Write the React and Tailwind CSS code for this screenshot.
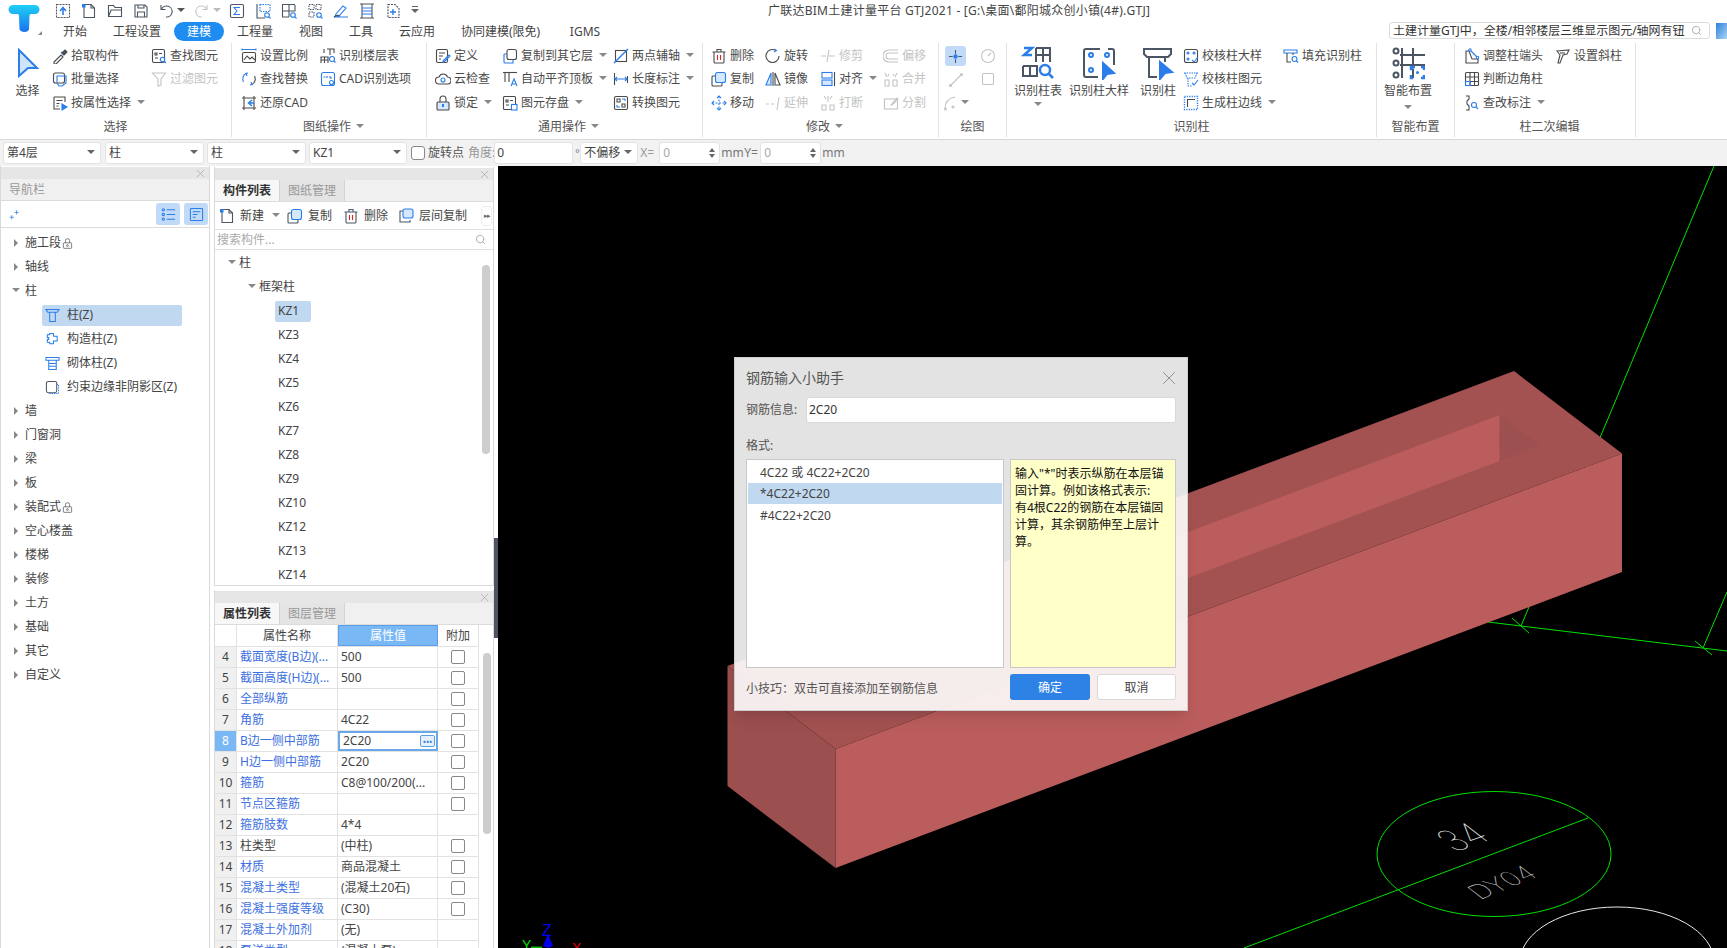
import React from "react";
import { X, Search } from "lucide-react";

const BLUE = "#2b7de9";

function Ic({ children, s = 16, c = "" }) {
  return (
    <svg width={s} height={s} viewBox="0 0 16 16" fill="none" stroke="currentColor" strokeWidth="1.1" className={`shrink-0 ${c}`}>
      {children}
    </svg>
  );
}

function Caret({ dir = "down", c = "text-[#888]" }) {
  const pts = dir === "down" ? "0,1 8,1 4,5" : "2,0 6,4 2,8";
  return (
    <svg width="8" height="8" viewBox="0 0 8 8" className={`shrink-0 ${c}`}>
      <polygon points={pts} fill="currentColor" />
    </svg>
  );
}

const icons = {
  pick: <><path d="M2 14l7-7 2 2-7 7H2z" /><path d="M9 4l3 3" stroke={BLUE} /><path d="M10 5l3-3 2 2-3 3z" fill="#4b5563" /></>,
  batch: <><rect x="1.5" y="2" width="11" height="10" rx="2" /><path d="M5 5h9v7l-4 3H7l-2-3z" stroke={BLUE} /></>,
  attr: <><path d="M2 2h11v5M2 2v12h6" /><path d="M4.5 5.5h6M4.5 8.5h3M4.5 11h2" /><path d="M10 9l5 3-5 3z" fill={BLUE} stroke={BLUE} /></>,
  find: <><rect x="1.5" y="1.5" width="12" height="13" rx="1.5" /><path d="M4 5h2v2H4zM8 5.5h3M4 10h3" /><circle cx="11.5" cy="11.5" r="2.2" stroke={BLUE} fill="#fff" /><path d="M13 13l2 2" stroke={BLUE} /></>,
  filter: <><path d="M1.5 2h13L10 8v6l-3 1V8z" /></>,
  scale: <><path d="M1 1.5h14M1 .5v2M15 .5v2" stroke={BLUE} /><rect x="1.5" y="4.5" width="13" height="10" rx="1.5" /><path d="M3 12l3-4 3 3 2-2 3 3" /></>,
  replace: <><path d="M5 2.5C2 4 1 8 2.5 11" stroke={BLUE} /><path d="M11 13.5c3-1.5 4-5.5 2.5-8.5" /><path d="M7 2l-2 .5L6 5M9 14l2-.5L10 11" stroke={BLUE} /></>,
  restore: <><path d="M3 1v14M13 1v14M1 3h14M1 13h14" /><path d="M11 5L7.5 8l3.5 3M7.5 8H13" stroke={BLUE} strokeWidth="1.5" /></>,
  floor: <><path d="M1 15V9h7v6M1 12h7M4.5 9v6M4 5V1M7 1h7v4M10 1v6" /><circle cx="12" cy="11" r="2.5" stroke={BLUE} fill="#fff" /><path d="M14 13l1.5 1.5" stroke={BLUE} /></>,
  cad: <><rect x="1.5" y="1.5" width="13" height="13" rx="2" stroke={BLUE} /><path d="M3.5 6h2M7 5v2M10 5v2h2" stroke={BLUE} /><circle cx="11.5" cy="11.5" r="2" stroke={BLUE} /></>,
  def: <><rect x="1.5" y="1.5" width="11" height="13" rx="1.5" /><path d="M4 5h6M4 8h4M4 11h2" /><path d="M8 13l6-6 1 1-6 6H8z" stroke={BLUE} /></>,
  cloud: <><path d="M4 13a3.5 3.5 0 010-7 4.5 4.5 0 018.5 0 3.5 3.5 0 010 7z" /><circle cx="8" cy="9" r="2" stroke={BLUE} /></>,
  lock: <><path d="M5 7V4a3 3 0 016 0v3" /><rect x="2" y="7" width="12" height="8" rx="1" fill="#d6e8fb" /><path d="M8 9v3" stroke={BLUE} strokeWidth="2" /></>,
  copyTo: <><path d="M2 6h3M2 6v8a1 1 0 001 1h8v-3" stroke={BLUE} /><rect x="5" y="1.5" width="9.5" height="10" rx="2" /></>,
  align: <><path d="M1 1.5h14" /><path d="M3 2v9M7 2v9" /><path d="M9 15l3-7 3 7M10 13h4" stroke={BLUE} /></>,
  save: <><rect x="1.5" y="1.5" width="12" height="13" rx="1" /><path d="M4 5h2v2H4zM8 5.5h3M4 10h3" /><rect x="9.5" y="9.5" width="5.5" height="5.5" stroke={BLUE} fill="#fff" /></>,
  axis: <><rect x="2.5" y="2.5" width="11" height="11" /><path d="M1 15L15 1M1 15" stroke={BLUE} strokeWidth="1.4" /></>,
  dim: <><path d="M1.5 2v12M14.5 5v7" /><path d="M2 8h12M4 6L2 8l2 2M12 6l2 2-2 2" stroke={BLUE} /></>,
  convert: <><rect x="1.5" y="1.5" width="13" height="13" rx="1.5" /><path d="M4 4h3v3H4z" /><path d="M9 9h3v3H9z" /><path d="M9 4h3v2M7 12H4v-2" stroke={BLUE} /></>,
  del: <><path d="M1.5 4h13M6 4V1.5h4V4" /><path d="M3 4v10a1 1 0 001 1h8a1 1 0 001-1V4" /><path d="M6.5 7v5M9.5 7v5" stroke="#e02020" /></>,
  copy: <><path d="M5 5H2a1 1 0 00-1 1v8a1 1 0 001 1h8a1 1 0 001-1v-3" /><rect x="4.5" y="1.5" width="10" height="10" rx="2" fill="#d6e8fb" stroke={BLUE} /></>,
  move: <><path d="M8 1v14M1 8h14" stroke={BLUE} strokeDasharray="2 1.5" /><path d="M6 3l2-2 2 2M6 13l2 2 2-2M3 6L1 8l2 2M13 6l2 2-2 2" stroke={BLUE} /></>,
  rotate: <><path d="M11 2.5A6.500 6.500 0 1014 8" /><path d="M9 1l2.500 1.500L9 4" stroke={BLUE} /></>,
  mirror: <><path d="M6 2L1 14h5z" fill="#d6e8fb" stroke={BLUE} /><path d="M10 2l5 12h-5zM8 1v14" /></>,
  extend: <><path d="M1 9h3M6 9h3M14 2l-2 13" /></>,
  trim: <><path d="M1 8h5M9 8h6M9 2L7 14" /></>,
  alignObj: <><rect x="2" y="1.5" width="10" height="5.5" stroke={BLUE} /><rect x="2" y="9" width="10" height="5.5" fill="#d6e8fb" stroke={BLUE} /><path d="M14.5 1v14" /></>,
  brk: <><path d="M2 10h4v5H2zM10 10h4v5h-4zM4 1l2 3M12 1l-2 3M8 1v6" /></>,
  offset: <><path d="M15 2H6a6 6 0 000 12h9M15 5H6a3 3 0 000 6h9" /></>,
  merge: <><path d="M2 9h4v6H2zM10 9h4v6h-4zM2 2l2 4M14 2l-2 4M6 3l-1 2M10 3l1 2" /></>,
  split: <><rect x="1.5" y="4" width="13" height="10" /><path d="M8 10l6-7 1 1-6 6z" /></>,
  snap: <><path d="M1 8h4M11 8h4M8 1v4M8 11v4" /><circle cx="8" cy="8" r="1.8" fill={BLUE} stroke={BLUE} /></>,
  dial: <><circle cx="8" cy="8" r="6.5" /><path d="M8 8l3-3" /></>,
  line: <><path d="M2 14L14 2" /><circle cx="2.5" cy="13.5" r="1" /><circle cx="13.5" cy="2.5" r="1" /></>,
  rect: <><rect x="2.5" y="2.5" width="11" height="11" rx="1" /></>,
  arc: <><path d="M2 14C2 7 6 3 12 2" /><circle cx="2.5" cy="14" r="1" /><circle cx="10" cy="12" r="1" /></>,
  checkBig: <><rect x="1.5" y="1.5" width="13" height="13" rx="2" /><circle cx="5" cy="5" r="1" stroke={BLUE} /><circle cx="11" cy="5" r="1" stroke={BLUE} /><circle cx="5" cy="11" r="1" stroke={BLUE} /><path d="M9 12l2 2 4-5" stroke={BLUE} /></>,
  checkCol: <><path d="M1 2h14M2 2l2 5h8l2-5" stroke={BLUE} strokeDasharray="1.5 1" /><path d="M5 7v8h4" stroke={BLUE} strokeDasharray="1.5 1" /><path d="M9 12l2 2 4-5" stroke={BLUE} /></>,
  edge: <><rect x="1.5" y="1.5" width="13" height="13" stroke={BLUE} strokeDasharray="1.2 1.2" strokeWidth="1.4" /><path d="M4.5 12V4.5H12" /></>,
  fill: <><path d="M1 2h13v3H1z" stroke={BLUE} /><path d="M4 5v9h4M10 5v2" /><circle cx="11.5" cy="11" r="2.5" stroke={BLUE} /><path d="M13.5 13l1.5 1.5" stroke={BLUE} /></>,
  head: <><path d="M2 3v12h12v-4H8L5 3z" /><circle cx="6" cy="2" r="1.2" stroke={BLUE} /><path d="M7 3l6 6" stroke={BLUE} /><circle cx="13.5" cy="9.5" r="1.2" stroke={BLUE} /></>,
  slant: <><path d="M2 3l12-1-2 4-4 1-3 8H3l2-8z" /><path d="M5 5h5" /></>,
  corner: <><rect x="1.5" y="1.5" width="13" height="13" rx="1" /><path d="M1.5 6h13M1.5 10.5h13M6 1.5v13M10.5 1.5v13" /><rect x="1.5" y="10.5" width="4.5" height="4" stroke={BLUE} /></>,
  note: <><path d="M2 1h3v3L3 6v3l2 2v4H2" /><circle cx="10" cy="10" r="2.5" stroke={BLUE} /><path d="M12 12l2 2" stroke={BLUE} /></>,
  newFile: <><path d="M3 1.5h7l3.5 3.5v9.5H3z" /><path d="M10 1.5V5h3.5" /><rect x="1" y="1" width="3.5" height="3.5" fill={BLUE} stroke="none" /></>,
  layerCopy: <><path d="M5 3H2v11h10v-2" /><path d="M3.5 1.5" /><rect x="5" y="1" width="10" height="9" rx="2" fill="#d6e8fb" stroke={BLUE} /></>,
  upload: <><rect x="1.5" y="1.5" width="13" height="13" strokeDasharray="2 1" /><path d="M8 12V6M5 8l3-3.5L11 8" stroke={BLUE} strokeWidth="1.6" /></>,
  folder: <><path d="M1.5 13.5v-11h5l1.5 2h6.500v9zM1.500 13.500L4 7h11" /></>,
  disk: <><path d="M2 2h10l2 2v10H2z" /><path d="M5 2v3h6V2M4.5 14V9h7v5" /></>,
  undo: <><path d="M3 2v4.5h4.5" /><path d="M3.5 6.5A5.500 5.500 0 118 14" /></>,
  sigma: <><rect x="1.5" y="1.5" width="13" height="13" rx="1.5" /><path d="M11 4.5H5l3 3.500-3 3.500h6" stroke={BLUE} /></>,
  tableA: <><path d="M2 1v14h8" /><rect x="5" y="1.5" width="10" height="7" stroke={BLUE} strokeDasharray="1.5 1" /><circle cx="12" cy="12" r="2.3" stroke={BLUE} /><path d="M14 14l1.500 1.500" stroke={BLUE} /></>,
  tableB: <><path d="M10 1.500H1.500V14H8M1.500 8H14V2M8 1.500V14M14 1.500h-4" /><circle cx="12" cy="12" r="2.3" stroke={BLUE} /><path d="M14 14l1.500 1.500" stroke={BLUE} /></>,
  tableC: <><path d="M2 1.500h5v5H2zM2 9h5v5H2zM9 1.500h5v5H9z" strokeDasharray="1.5 1" /><circle cx="12" cy="12" r="2.3" stroke={BLUE} /><path d="M14 14l1.500 1.500" stroke={BLUE} /></>,
  pen: <><path d="M1 14h14M3 11l7-8 3 2-7 8-4 1z" stroke={BLUE} /><path d="M1 14c2-2 4-2 6-1" /></>,
  ladder: <><path d="M3 1v14M13 1v14M1 1h14M1 15h14" /><path d="M3 5h10M3 8h10M3 11h10" stroke={BLUE} /></>,
  addBox: <><path d="M3 1.500h7l4 4v9H3z" strokeDasharray="2 1" /><path d="M5 9h6M8 6v6" stroke={BLUE} strokeWidth="1.4" /></>,
  spark: <><path d="M11 2v6M8 5h6M4 9v6M1 12h6" stroke={BLUE} /></>,
  list: <><circle cx="2.5" cy="3" r="1.2" stroke={BLUE} /><circle cx="2.5" cy="8" r="1.2" stroke={BLUE} /><circle cx="2.5" cy="13" r="1.2" stroke={BLUE} /><path d="M6 3h9M6 8h9M6 13h9" stroke={BLUE} /></>,
  form: <><rect x="1.5" y="1.5" width="13" height="13" rx="1" stroke={BLUE} /><path d="M4 5h8M4 8h5M4 11h3" stroke={BLUE} /></>,
  column: <><path d="M1 1.500h14l-2 3H3zM5 4.500v10h6v-10" stroke={BLUE} /></>,
  gz: <><path d="M5 1.500h4v3h4v5h-4v3H5V11H2.500V8H4V6H2.500V3H5z" stroke={BLUE} /></>,
  brick: <><path d="M1 1.500h14v3H1zM4 4.500v10h8v-10M4 8h8M4 11h8" stroke={BLUE} /></>,
  shade: <><rect x="1.5" y="1.5" width="11" height="12" rx="2" /><path d="M12.500 4.500l2 .5v9.500H4" stroke={BLUE} strokeDasharray="1.5 1" /></>,
  lockSm: <><path d="M5 7V4a3 3 0 016 0v3" /><rect x="2" y="7" width="12" height="8" rx="1" /><circle cx="8" cy="11" r="1.3" /></>,
};

function Item({ icon, label, caret, off }) {
  return (
    <div className={`h-[23.5px] flex items-center gap-[3px] whitespace-nowrap ${off ? "text-[#c4c4c4]" : "text-[#4a4a4a]"}`}>
      <Ic>{icons[icon]}</Ic>
      <span>{label}</span>
      {caret && <span className="ml-[3px]"><Caret /></span>}
    </div>
  );
}

function Group({ label, caret, className, children }) {
  return (
    <div className={`h-full flex flex-col border-r border-[#e2e2e2] ${className}`}>
      <div className="h-[74px] pt-px flex">{children}</div>
      <div className="h-[20px] flex items-center justify-center gap-[5px] text-[#555]">
        <span>{label}</span>
        {caret && <Caret />}
      </div>
    </div>
  );
}

function BigBtn({ label, caret, className, children }) {
  return (
    <div className={`flex flex-col items-center text-[#4a4a4a] ${className}`}>
      <div className="h-[34px] mt-[2px] flex items-center">{children}</div>
      <div className="h-[21px] flex items-center whitespace-nowrap">{label}</div>
      {caret && <Caret />}
    </div>
  );
}

function BigIcon({ children }) {
  return (
    <svg width="34" height="34" viewBox="0 0 34 34" fill="none" stroke="#4b5563" strokeWidth="2">
      {children}
    </svg>
  );
}

function Ribbon() {
  return (
    <div className="h-[99px] bg-white border-b border-[#d8d8d8] py-[2px] flex text-[12px] leading-none">
      <Group label="选择" className="w-[232px]">
        <BigBtn label="选择" className="w-[52px] pl-[3px]">
          <svg width="24" height="30" viewBox="0 0 24 30" fill="#cfe3fa" stroke={BLUE} strokeWidth="2"><path d="M3 2l18 18h-9L3 28z" /></svg>
        </BigBtn>
        <div className="w-[99px]">
          <Item icon="pick" label="拾取构件" />
          <Item icon="batch" label="批量选择" />
          <Item icon="attr" label="按属性选择" caret />
        </div>
        <div>
          <Item icon="find" label="查找图元" />
          <Item icon="filter" label="过滤图元" off />
        </div>
      </Group>
      <Group label="图纸操作" caret className="w-[195px] pl-[9px]">
        <div className="w-[79px]">
          <Item icon="scale" label="设置比例" />
          <Item icon="replace" label="查找替换" />
          <Item icon="restore" label="还原CAD" />
        </div>
        <div>
          <Item icon="floor" label="识别楼层表" />
          <Item icon="cad" label="CAD识别选项" />
        </div>
      </Group>
      <Group label="通用操作" caret className="w-[276px] pl-[8px]">
        <div className="w-[67px]">
          <Item icon="def" label="定义" />
          <Item icon="cloud" label="云检查" />
          <Item icon="lock" label="锁定" caret />
        </div>
        <div className="w-[111px]">
          <Item icon="copyTo" label="复制到其它层" caret />
          <Item icon="align" label="自动平齐顶板" caret />
          <Item icon="save" label="图元存盘" caret />
        </div>
        <div>
          <Item icon="axis" label="两点辅轴" caret />
          <Item icon="dim" label="长度标注" caret />
          <Item icon="convert" label="转换图元" />
        </div>
      </Group>
      <Group label="修改" caret className="w-[236px] pl-[8px]">
        <div className="w-[54px]">
          <Item icon="del" label="删除" />
          <Item icon="copy" label="复制" />
          <Item icon="move" label="移动" />
        </div>
        <div className="w-[55px]">
          <Item icon="rotate" label="旋转" />
          <Item icon="mirror" label="镜像" />
          <Item icon="extend" label="延伸" off />
        </div>
        <div className="w-[63px]">
          <Item icon="trim" label="修剪" off />
          <Item icon="alignObj" label="对齐" caret />
          <Item icon="brk" label="打断" off />
        </div>
        <div>
          <Item icon="offset" label="偏移" off />
          <Item icon="merge" label="合并" off />
          <Item icon="split" label="分割" off />
        </div>
      </Group>
      <Group label="绘图" className="w-[68px]">
        <div className="w-[33px] flex flex-col items-center">
          <div className="w-[21px] h-[20px] mt-[2px] mb-[2px] bg-[#c0daf7] rounded-[3px] flex items-center justify-center text-[#4b5563]"><Ic s={15}>{icons.snap}</Ic></div>
          <div className="h-[23.5px] flex items-center text-[#c4c4c4]"><Ic>{icons.line}</Ic></div>
          <div className="h-[23.5px] flex items-center gap-[2px] text-[#c4c4c4]"><Ic>{icons.arc}</Ic><Caret /></div>
        </div>
        <div className="w-[32px] flex flex-col items-center text-[#c4c4c4]">
          <div className="h-[23.5px] flex items-center"><Ic>{icons.dial}</Ic></div>
          <div className="h-[23.5px] flex items-center"><Ic>{icons.rect}</Ic></div>
        </div>
      </Group>
      <Group label="识别柱" className="w-[370px]">
        <BigBtn label="识别柱表" caret className="w-[62px]">
          <BigIcon>
            <path d="M3 2h8l-8 7h8" stroke={BLUE} strokeWidth="2.5" />
            <path d="M15 2h14v14M15 2v14M22 2v14M15 9h14M2 20v10h14V20H2M9 20v10" />
            <circle cx="24" cy="24" r="5" stroke={BLUE} strokeWidth="2.5" /><path d="M28 28l4 4" stroke={BLUE} strokeWidth="2.5" />
          </BigIcon>
        </BigBtn>
        <BigBtn label="识别柱大样" className="w-[60px]">
          <BigIcon>
            <path d="M18 3H4a2 2 0 00-2 2v24a2 2 0 002 2h12M26 3h4a2 2 0 012 2v14" />
            <circle cx="9" cy="9" r="2" stroke={BLUE} strokeWidth="2" /><circle cx="25" cy="9" r="2" stroke={BLUE} strokeWidth="2" /><circle cx="9" cy="24" r="2" stroke={BLUE} strokeWidth="2" />
            <path d="M21 17l11 10-7 1-4 5z" fill={BLUE} stroke={BLUE} />
          </BigIcon>
        </BigBtn>
        <BigBtn label="识别柱" className="w-[54px] pl-[4px]">
          <BigIcon>
            <path d="M3 3h27v5l-3 3H6L3 8zM8 11v20h8M24 11v5" />
            <path d="M19 16l12 10-7 1-5 6z" fill={BLUE} stroke={BLUE} />
          </BigIcon>
        </BigBtn>
        <div className="w-[100px]">
          <Item icon="checkBig" label="校核柱大样" />
          <Item icon="checkCol" label="校核柱图元" />
          <Item icon="edge" label="生成柱边线" caret />
        </div>
        <div>
          <Item icon="fill" label="填充识别柱" />
        </div>
      </Group>
      <Group label="智能布置" className="w-[78px]">
        <BigBtn label="智能布置" className="w-[62px]">
          <BigIcon>
            <path d="M11 2v30M22 2v30M9 9h25M9 19h25" />
            <circle cx="5" cy="5" r="2.5" /><circle cx="5" cy="17" r="2.5" /><circle cx="5" cy="29" r="2.5" />
            <path d="M22 23h-2v-2h4M30 21h3v3M33 29v3h-3M22 32h-2v-3" stroke={BLUE} strokeWidth="2.5" fill="#fff" />
            <circle cx="26.5" cy="26.5" r="1.5" fill={BLUE} stroke="none" />
          </BigIcon>
        </BigBtn>
        <span className="-ml-[35px] mt-[60px] h-[8px]"><Caret /></span>
      </Group>
      <Group label="柱二次编辑" className="w-[181px] pl-[9px]">
        <div className="w-[91px]">
          <Item icon="head" label="调整柱端头" />
          <Item icon="corner" label="判断边角柱" />
          <Item icon="note" label="查改标注" caret />
        </div>
        <div>
          <Item icon="slant" label="设置斜柱" />
        </div>
      </Group>
    </div>
  );
}

function TitleRows() {
  const tabs = [
    ["开始", "w-[62px]"],
    ["工程设置", "w-[62px]"],
    ["建模", "w-[50px] ml-[6px] bg-[#1e8cf0] text-white rounded-full"],
    ["工程量", "w-[62px]"],
    ["视图", "w-[50px]"],
    ["工具", "w-[50px]"],
    ["云应用", "w-[62px]"],
    ["协同建模(限免)", "w-[105px]"],
    ["IGMS", "w-[64px]"],
  ];
  return (
    <div className="h-[41px] bg-white flex text-[12px] leading-none text-[#444]">
      <div className="w-[44px] relative">
        <svg width="32" height="30" viewBox="0 0 32 30" className="ml-[8px] mt-[3px]">
          <defs>
            <linearGradient id="tg" x1="0" y1="0" x2="0" y2="1">
              <stop offset="0" stopColor="#1fd0f5" />
              <stop offset="1" stopColor="#1a72ee" />
            </linearGradient>
          </defs>
          <path d="M5 2h22a4 4 0 010 9h-4c-1 0-1.500 1-1.500 2l-.5 13c0 4-9 4-9.500 0L11 13c0-1-.5-2-1.500-2H5a4.500 4.500 0 010-9z" fill="url(#tg)" />
        </svg>
        <span className="absolute left-[38px] top-[31px] w-0 h-0 border-l-[4px] border-l-transparent border-b-[4px] border-b-[#888]" />
      </div>
      <div className="flex-1 flex flex-col">
        <div className="h-[22px] flex items-center text-[#4b5563]">
          <div className="ml-[6px] w-[26px] flex justify-center"><Ic>{icons.upload}</Ic></div>
          <div className="w-[26px] flex justify-center"><Ic>{icons.newFile}</Ic></div>
          <div className="w-[26px] flex justify-center"><Ic>{icons.folder}</Ic></div>
          <div className="w-[26px] flex justify-center"><Ic>{icons.disk}</Ic></div>
          <div className="w-[40px] flex items-center pl-[4px] gap-[3px]"><Ic>{icons.undo}</Ic><Caret c="text-[#555]" /></div>
          <div className="w-[30px] flex items-center gap-[3px] text-[#c4c4c4]"><span className="-scale-x-100 flex"><Ic>{icons.undo}</Ic></span><Caret c="text-[#bbb]" /></div>
          <div className="w-[26px] flex justify-center"><Ic>{icons.sigma}</Ic></div>
          <div className="w-[26px] flex justify-center"><Ic>{icons.tableA}</Ic></div>
          <div className="w-[26px] flex justify-center"><Ic>{icons.tableB}</Ic></div>
          <div className="w-[26px] flex justify-center"><Ic>{icons.tableC}</Ic></div>
          <div className="w-[26px] flex justify-center"><Ic>{icons.pen}</Ic></div>
          <div className="w-[26px] flex justify-center"><Ic>{icons.ladder}</Ic></div>
          <div className="w-[26px] flex justify-center"><Ic>{icons.addBox}</Ic></div>
          <div className="w-[18px] flex flex-col items-center gap-[1px]"><span className="w-[6px] h-px bg-[#666]" /><Caret c="text-[#666]" /></div>
          <div className="ml-[344px] text-[12px] tracking-[0.25px] text-[#444] whitespace-pre">广联达BIM土建计量平台 GTJ2021 - [G:\桌面\鄱阳城众创小镇(4#).GTJ]</div>
        </div>
        <div className="h-[19px] flex items-stretch">
          {tabs.map(([t, c]) => (
            <div key={t} className={`flex items-center justify-center ${c}`}>{t}</div>
          ))}
          <div className="ml-auto flex items-center mb-[2px]">
            <div className="w-[321px] h-[17px] border border-[#dcdcdc] rounded-[3px] flex items-center pl-[3px] pr-[7px] overflow-hidden">
              <span className="w-[293px] overflow-hidden whitespace-nowrap text-[#333]">土建计量GTJ中，全楼/相邻楼层三维显示图元/轴网有钮</span>
              <Search size={11} className="ml-auto text-[#aaa]" />
            </div>
            <div className="ml-[6px] w-[11px] h-[16px] bg-gradient-to-br from-[#2a80d8] to-[#a8d4f4]" />
          </div>
        </div>
      </div>
    </div>
  );
}

function Combo({ label, className }) {
  return (
    <div className={`h-[22px] bg-white border border-[#e3e3e3] rounded-[3px] flex items-center justify-between pl-[3px] pr-[5px] text-[#444] ${className}`}>
      <span>{label}</span>
      <Caret c="text-[#666]" />
    </div>
  );
}

function Spin({ className }) {
  return (
    <div className={`h-[22px] bg-white border border-[#e3e3e3] rounded-[3px] flex items-center justify-between pl-[3px] pr-[4px] text-[#aaa] ${className}`}>
      <span>0</span>
      <div className="flex flex-col gap-[2px] text-[#666]">
        <span className="w-0 h-0 border-x-[3px] border-x-transparent border-b-[4px] border-b-current" />
        <span className="w-0 h-0 border-x-[3px] border-x-transparent border-t-[4px] border-t-current" />
      </div>
    </div>
  );
}

function Options() {
  return (
    <div className="h-[26px] bg-[#f2f2f2] flex items-center pl-[3px] text-[12px] leading-none text-[#777]">
      <Combo label="第4层" className="w-[98px]" />
      <Combo label="柱" className="w-[99px] ml-[4px]" />
      <Combo label="柱" className="w-[99px] ml-[3px]" />
      <Combo label="KZ1" className="w-[98px] ml-[3px]" />
      <span className="w-[14px] h-[14px] ml-[4px] bg-white border border-[#888] rounded-[3px]" />
      <span className="ml-[3px] text-[#555]">旋转点</span>
      <span className="ml-[4px] text-[#999]">角度:</span>
      <div className="-ml-[1px] w-[79px] h-[22px] bg-white border border-[#e3e3e3] rounded-[3px] flex items-center pl-[2px] text-[#444]">0</div>
      <span className="ml-[2px] w-[5px] text-[10px]">°</span>
      <Combo label="不偏移" className="w-[58px]" />
      <span className="ml-[2px] w-[19px] text-[#999]">X=</span>
      <Spin className="w-[61px]" />
      <span className="ml-[1px] w-[23px] text-[#777]">mm</span>
      <span className="w-[16px] text-[#777]">Y=</span>
      <Spin className="w-[61px]" />
      <span className="ml-[1px] text-[#777]">mm</span>
    </div>
  );
}

function PanelBar() {
  return (
    <div className="h-[12px] mt-px bg-[#e6e6e6] flex items-center justify-end pr-[2px] shrink-0">
      <X size={13} strokeWidth={1.4} className="text-[#aaa]" />
    </div>
  );
}

function NavRow({ label, open, locked }) {
  return (
    <div className="h-[24px] flex items-center text-[#444]">
      <span className="w-[24px] pl-[11px] flex">
        <Caret dir={open ? "down" : "right"} />
      </span>
      <span>{label}</span>
      {locked && <span className="ml-[1px] text-[#555]"><Ic s={11}>{icons.lockSm}</Ic></span>}
    </div>
  );
}

function NavSub({ icon, label, active }) {
  return (
    <div className="h-[24px] flex items-center">
      <div className={`ml-[41px] w-[140px] h-[21px] flex items-center gap-[7px] pl-[3px] rounded-[2px] text-[#444] whitespace-nowrap ${active ? "bg-[#c0d8f0]" : ""}`}>
        <span className="text-[#4b5563]"><Ic s={15}>{icons[icon]}</Ic></span>
        <span>{label}</span>
      </div>
    </div>
  );
}

function NavPanel() {
  return (
    <div className="w-[210px] shrink-0 h-full border-x border-[#d9d9d9] bg-white flex flex-col">
      <PanelBar />
      <div className="h-[22px] bg-[#f0f0f0] border-b border-[#dcdcdc] flex items-center pl-[8px] text-[#999]">导航栏</div>
      <div className="h-[27px] border-b border-[#dcdcdc] flex items-center pl-[8px] pr-[1px]">
        <Ic s={11}>{icons.spark}</Ic>
        <div className="ml-auto w-[24px] h-[22px] bg-[#c0daf7] rounded-[3px] flex items-center justify-center"><Ic s={15}>{icons.list}</Ic></div>
        <div className="ml-[4px] w-[24px] h-[22px] bg-[#c0daf7] rounded-[3px] flex items-center justify-center"><Ic s={15}>{icons.form}</Ic></div>
      </div>
      <div className="pt-[3px]">
        <NavRow label="施工段" locked />
        <NavRow label="轴线" />
        <NavRow label="柱" open />
        <NavSub icon="column" label="柱(Z)" active />
        <NavSub icon="gz" label="构造柱(Z)" />
        <NavSub icon="brick" label="砌体柱(Z)" />
        <NavSub icon="shade" label="约束边缘非阴影区(Z)" />
        {["墙", "门窗洞", "梁", "板"].map((t) => <NavRow key={t} label={t} />)}
        <NavRow label="装配式" locked />
        {["空心楼盖", "楼梯", "装修", "土方", "基础", "其它", "自定义"].map((t) => <NavRow key={t} label={t} />)}
      </div>
    </div>
  );
}

function Tabs({ a, b }) {
  return (
    <div className="h-[22px] bg-[#f0f0f0] border-b border-[#dcdcdc] flex shrink-0">
      <div className="w-[65px] bg-[#f7f7f7] border-r border-[#d4d4d4] flex items-center justify-center font-bold text-[#333]">{a}</div>
      <div className="w-[65px] bg-[#e4e4e4] border-r border-[#d4d4d4] flex items-center justify-center text-[#999]">{b}</div>
    </div>
  );
}

function ToolBtn({ icon, label, caret, className }) {
  return (
    <div className={`flex items-center gap-[5px] text-[#444] whitespace-nowrap ${className}`}>
      <span className="text-[#4b5563]"><Ic>{icons[icon]}</Ic></span>
      <span>{label}</span>
      {caret && <span className="ml-[3px]"><Caret /></span>}
    </div>
  );
}

function ComponentPanel() {
  const kz = ["KZ1", "KZ3", "KZ4", "KZ5", "KZ6", "KZ7", "KZ8", "KZ9", "KZ10", "KZ12", "KZ13", "KZ14"];
  return (
    <div className="h-[419px] border-x border-b border-[#d9d9d9] bg-white flex flex-col shrink-0">
      <PanelBar />
      <Tabs a="构件列表" b="图纸管理" />
      <div className="h-[28px] border-b border-[#e0e0e0] flex items-center pl-[4px] shrink-0">
        <ToolBtn icon="newFile" label="新建" caret />
        <ToolBtn icon="copy" label="复制" className="ml-[7px]" />
        <ToolBtn icon="del" label="删除" className="ml-[11px]" />
        <ToolBtn icon="layerCopy" label="层间复制" className="ml-[10px]" />
        <div className="ml-auto mr-px w-[11px] h-[20px] border border-[#eee] rounded-[3px] flex items-center justify-center text-[#666] text-[7px] tracking-[-1px]">▸▸</div>
      </div>
      <div className="h-[20px] border-b border-[#e0e0e0] flex items-center px-[2px] pr-[7px] text-[#aaa] shrink-0">
        <span>搜索构件...</span>
        <Search size={11} className="ml-auto" />
      </div>
      <div className="flex flex-1 overflow-hidden">
        <div className="flex-1 pt-[1px] text-[#444]">
          <div className="h-[24px] flex items-center pl-[13px] gap-[3px]"><Caret /><span>柱</span></div>
          <div className="h-[24px] flex items-center pl-[33px] gap-[3px]"><Caret /><span>框架柱</span></div>
          {kz.map((k, i) => (
            <div key={k} className="h-[24px] flex items-center pl-[60px]">
              <div className={`h-[21px] w-[36px] pl-[3px] flex items-center rounded-[2px] ${i === 0 ? "bg-[#c0d8f0]" : ""}`}>{k}</div>
            </div>
          ))}
        </div>
        <div className="w-[8px] mr-[3px] mt-[15px] h-[189px] bg-[#cdcdcd] rounded-full" />
      </div>
    </div>
  );
}

function PropRow({ n, name, value, check, dark, active }) {
  return (
    <div className="h-[21px] flex border-b border-[#e2e2e2] shrink-0">
      <div className={`w-[22px] flex items-center justify-center border-r border-[#e2e2e2] ${active ? "bg-[#7ab8f5] text-white" : "bg-[#f0f0f0] text-[#444]"}`}>{n}</div>
      <div className={`w-[101px] flex items-center pl-[3px] border-r border-[#e2e2e2] whitespace-nowrap overflow-hidden ${dark ? "text-[#444]" : "text-[#3c6fe0]"}`}>{name}</div>
      {active ? (
        <div className="w-[100px] border-2 border-[#6aa9e9] flex items-center justify-between pl-[3px] pr-[1px] text-[#444]">
          <span>{value}</span>
          <span className="w-[15px] h-[12px] border border-[#5a9fe8] rounded-[2px] bg-[#e6f0fb] flex items-center justify-center text-[#3b82d6] text-[9px] leading-none tracking-tight">•••</span>
        </div>
      ) : (
        <div className="w-[100px] flex items-center pl-[3px] border-r border-[#e2e2e2] text-[#444] whitespace-nowrap">{value}</div>
      )}
      <div className="w-[41px] flex items-center justify-center border-r border-[#e2e2e2]">
        {check && <span className="w-[14px] h-[14px] border border-[#888] rounded-[2px]" />}
      </div>
    </div>
  );
}

function PropPanel() {
  const rows = [
    { n: 4, name: "截面宽度(B边)(...", value: "500", check: true },
    { n: 5, name: "截面高度(H边)(...", value: "500", check: true },
    { n: 6, name: "全部纵筋", value: "", check: true },
    { n: 7, name: "角筋", value: "4C22", check: true },
    { n: 8, name: "B边一侧中部筋", value: "2C20", check: true, active: true },
    { n: 9, name: "H边一侧中部筋", value: "2C20", check: true },
    { n: 10, name: "箍筋", value: "C8@100/200(...", check: true },
    { n: 11, name: "节点区箍筋", value: "", check: true },
    { n: 12, name: "箍筋肢数", value: "4*4" },
    { n: 13, name: "柱类型", value: "(中柱)", check: true, dark: true },
    { n: 14, name: "材质", value: "商品混凝土", check: true },
    { n: 15, name: "混凝土类型", value: "(混凝土20石)", check: true },
    { n: 16, name: "混凝土强度等级", value: "(C30)", check: true },
    { n: 17, name: "混凝土外加剂", value: "(无)" },
    { n: 18, name: "泵送类型", value: "(混凝土泵)" },
  ];
  return (
    <div className="mt-[4px] flex-1 min-h-0 border-x border-[#d9d9d9] bg-white flex flex-col overflow-hidden">
      <PanelBar />
      <Tabs a="属性列表" b="图层管理" />
      <div className="flex flex-1 min-h-0">
        <div className="w-[264px] shrink-0 flex flex-col">
          <div className="h-[22px] flex border-b border-[#e2e2e2] shrink-0 text-[#444]">
            <div className="w-[22px] border-r border-[#e2e2e2]" />
            <div className="w-[101px] flex items-center justify-center border-r border-[#e2e2e2]">属性名称</div>
            <div className="w-[100px] flex items-center justify-center bg-[#7ab8f5] border border-[#5a9fe8] text-white">属性值</div>
            <div className="w-[41px] flex items-center justify-center border-r border-[#e2e2e2]">附加</div>
          </div>
          {rows.map((r) => <PropRow key={r.n} {...r} />)}
        </div>
        <div className="w-[8px] ml-[4px] mt-[28px] h-[181px] bg-[#cdcdcd] rounded-full" />
      </div>
    </div>
  );
}

function Scene() {
  return (
    <svg viewBox="498 166 1229 782" className="absolute inset-0 w-full h-full">
      <g stroke="#00e000" strokeWidth="1" fill="none">
        <path d="M1714 166L1521 626" />
        <path d="M1488 622L1727 651" />
        <path d="M1512 618L1529 633M1695 641L1712 655" />
        <path d="M1727 592L1703 648" />
        <ellipse cx="1494" cy="854" rx="117" ry="62.500" />
        <path d="M1244 948L1588 818" />
      </g>
      <ellipse cx="1617" cy="962" rx="97" ry="55" fill="none" stroke="#e8e8e8" strokeWidth="1" />
      <polygon points="727.500,666 835.600,749 835.600,868 727.500,786" fill="#9b4f4e" />
      <polygon points="727.500,666 1514,371 1622,453.500 835.600,749" fill="#a35251" />
      <polygon points="835.600,749 1622,453.500 1622,572 835.600,868" fill="#bb5d5c" />
      <polygon points="1499.600,415 1499.600,461 1100,611 1100,565" fill="#bb5d5c" />
      <polygon points="1499.600,415 1540,445.500 1499.600,461" fill="#9d5050" />
      <text transform="matrix(1.13 -.41 1.13 .87 1455 852.600)" fontFamily="Inter" fontWeight="100" fontSize="28" fill="#e0e0e0">34</text>
      <text transform="matrix(1.47 -.6 1.3 1 1480 900)" fontFamily="Inter" fontWeight="100" fontSize="16" fill="#e0e0e0">DY04</text>
      <text x="542" y="936" fontFamily="Liberation Sans" fontSize="16" fill="#0000ee">Z</text>
      <text x="522" y="950" fontFamily="Liberation Sans" fontSize="14" fill="#00e000">Y</text>
      <text x="572" y="953" fontFamily="Liberation Sans" fontSize="14" fill="#ee0000">X</text>
      <polygon points="548,934 553,946 548,948 543,946" fill="#0000ee" />
      <rect x="531" y="946.500" width="11" height="2" fill="#00c000" />
    </svg>
  );
}

function Dialog() {
  const tip = [
    '输入"*"时表示纵筋在本层锚',
    "固计算。例如该格式表示:",
    "有4根C22的钢筋在本层锚固",
    "计算，其余钢筋伸至上层计",
    "算。",
  ];
  return (
    <div className="absolute left-[236px] top-[191px] w-[454px] h-[354px] bg-white/[0.89] border border-[#cfcfcf] shadow-lg px-[11px] text-[12px] leading-none text-[#555] flex flex-col">
      <div className="h-[39px] flex items-center justify-between shrink-0">
        <span className="text-[14px]">钢筋输入小助手</span>
        <X size={22} strokeWidth={1} className="text-[#888] mr-[-4px]" />
      </div>
      <div className="h-[26px] flex items-center shrink-0">
        <span className="w-[60px]">钢筋信息:</span>
        <div className="flex-1 h-full bg-white border border-[#d8d8d8] rounded-[3px] flex items-center pl-[2px] text-[#333]">2C20</div>
      </div>
      <div className="h-[36px] pt-[10px] flex items-center shrink-0">格式:</div>
      <div className="h-[209px] flex gap-[6px] shrink-0">
        <div className="w-[258px] bg-white border border-[#c8c8c8] p-px pt-[2px] text-[#444]">
          <div className="h-[21px] flex items-center pl-[12px]">4C22 或 4C22+2C20</div>
          <div className="h-[21px] flex items-center pl-[12px] pt-px bg-[#c0d8f0]">*4C22+2C20</div>
          <div className="h-[24px] flex items-center pl-[12px]">#4C22+2C20</div>
        </div>
        <div className="flex-1 bg-[#ffffc8] border border-[#c8c8c8] pl-[4px] pt-[5px] text-[#111]">
          {tip.map((l) => <div key={l} className="h-[17px] flex items-center whitespace-nowrap">{l}</div>)}
        </div>
      </div>
      <div className="mt-[6px] h-[26px] flex items-center shrink-0">
        <span className="pt-[3px]">小技巧：双击可直接添加至钢筋信息</span>
        <div className="ml-auto w-[80px] h-full bg-[#2e82e6] rounded-[3px] flex items-center justify-center pt-px text-white">确定</div>
        <div className="ml-[7px] w-[79px] h-full bg-white border border-[#d8d8d8] rounded-[3px] flex items-center justify-center pt-px text-[#444]">取消</div>
      </div>
    </div>
  );
}

export default function App() {
  return (
    <div className="w-[1727px] h-[948px] overflow-hidden flex flex-col bg-white font-['Noto_Sans','Noto_Sans_CJK_SC',sans-serif]">
      <TitleRows />
      <Ribbon />
      <Options />
      <div className="flex-1 min-h-0 flex text-[12px] leading-none">
        <NavPanel />
        <div className="w-[4px] shrink-0" />
        <div className="w-[280px] shrink-0 h-full pt-px flex flex-col">
          <ComponentPanel />
          <PropPanel />
        </div>
        <div className="w-[4px] shrink-0"><div className="mt-[372px] h-[100px] bg-[#4e5560]" /></div>
        <div className="flex-1 relative bg-black overflow-hidden">
          <Scene />
          <Dialog />
        </div>
      </div>
    </div>
  );
}
